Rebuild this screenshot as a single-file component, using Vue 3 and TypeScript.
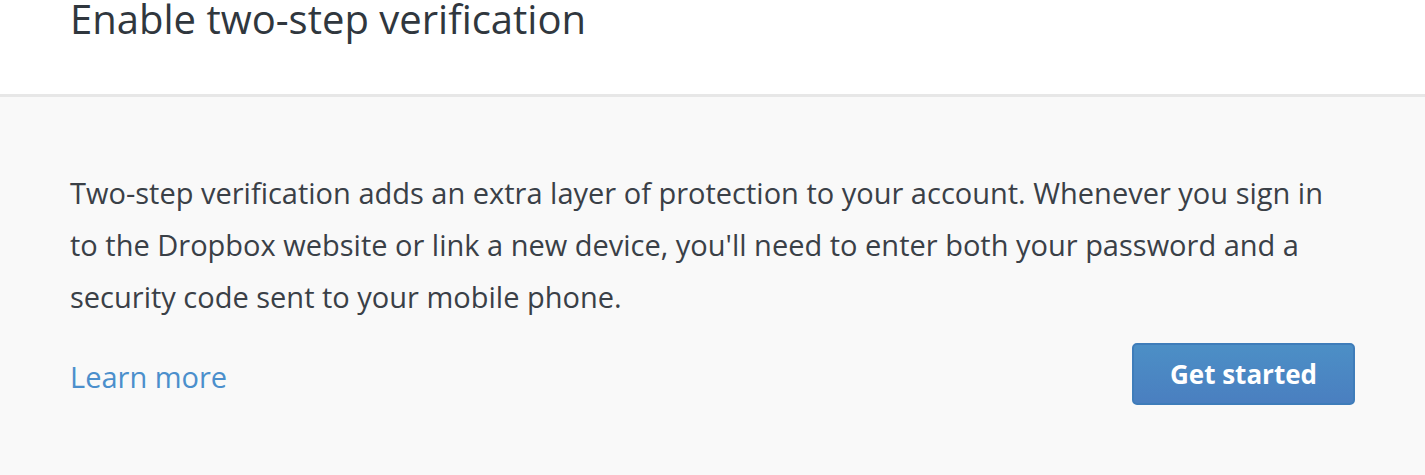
<script setup lang="ts">
const title = 'Enable two-step verification'
const description =
  "Two-step verification adds an extra layer of protection to your account. Whenever you sign in to the Dropbox website or link a new device, you'll need to enter both your password and a security code sent to your mobile phone."
</script>

<template>
  <main class="dialog">
    <header class="header">
      <h1>{{ title }}</h1>
    </header>
    <section class="content">
      <p>{{ description }}</p>
      <div class="actions">
        <a href="#">Learn more</a>
        <button type="button">Get started</button>
      </div>
    </section>
  </main>
</template>

<style scoped>
.dialog {
  display: flex;
  flex-direction: column;
  min-height: 100vh;
  background: #f9f9f9;
  color: #3a4047;
  font-family: "Open Sans", sans-serif;
}
.header {
  padding: 0 70px 56px;
  border-bottom: 3px solid #e7e7e7;
  background: #fff;
}
h1 {
  margin: 0;
  color: #30373e;
  font-size: 40px;
  font-weight: 400;
  line-height: 38px;
}
.content {
  padding: 70px 70px 0;
}
p {
  margin: 0;
  font-size: 29px;
  line-height: 52px;
}
.actions {
  display: flex;
  align-items: flex-end;
  justify-content: space-between;
  margin-top: 20px;
  font-size: 29px;
  line-height: 56px;
}
a {
  color: #4b8fcc;
  text-decoration: none;
}
button {
  padding: 0 36px;
  border: 2px solid #3f7dba;
  border-radius: 5px;
  background: linear-gradient(#4c8fc6, #4a7fc0);
  color: #fff;
  font: 700 26px/58px "Open Sans", sans-serif;
  cursor: pointer;
}
</style>

<style>
body {
  margin: 0;
}
</style>
